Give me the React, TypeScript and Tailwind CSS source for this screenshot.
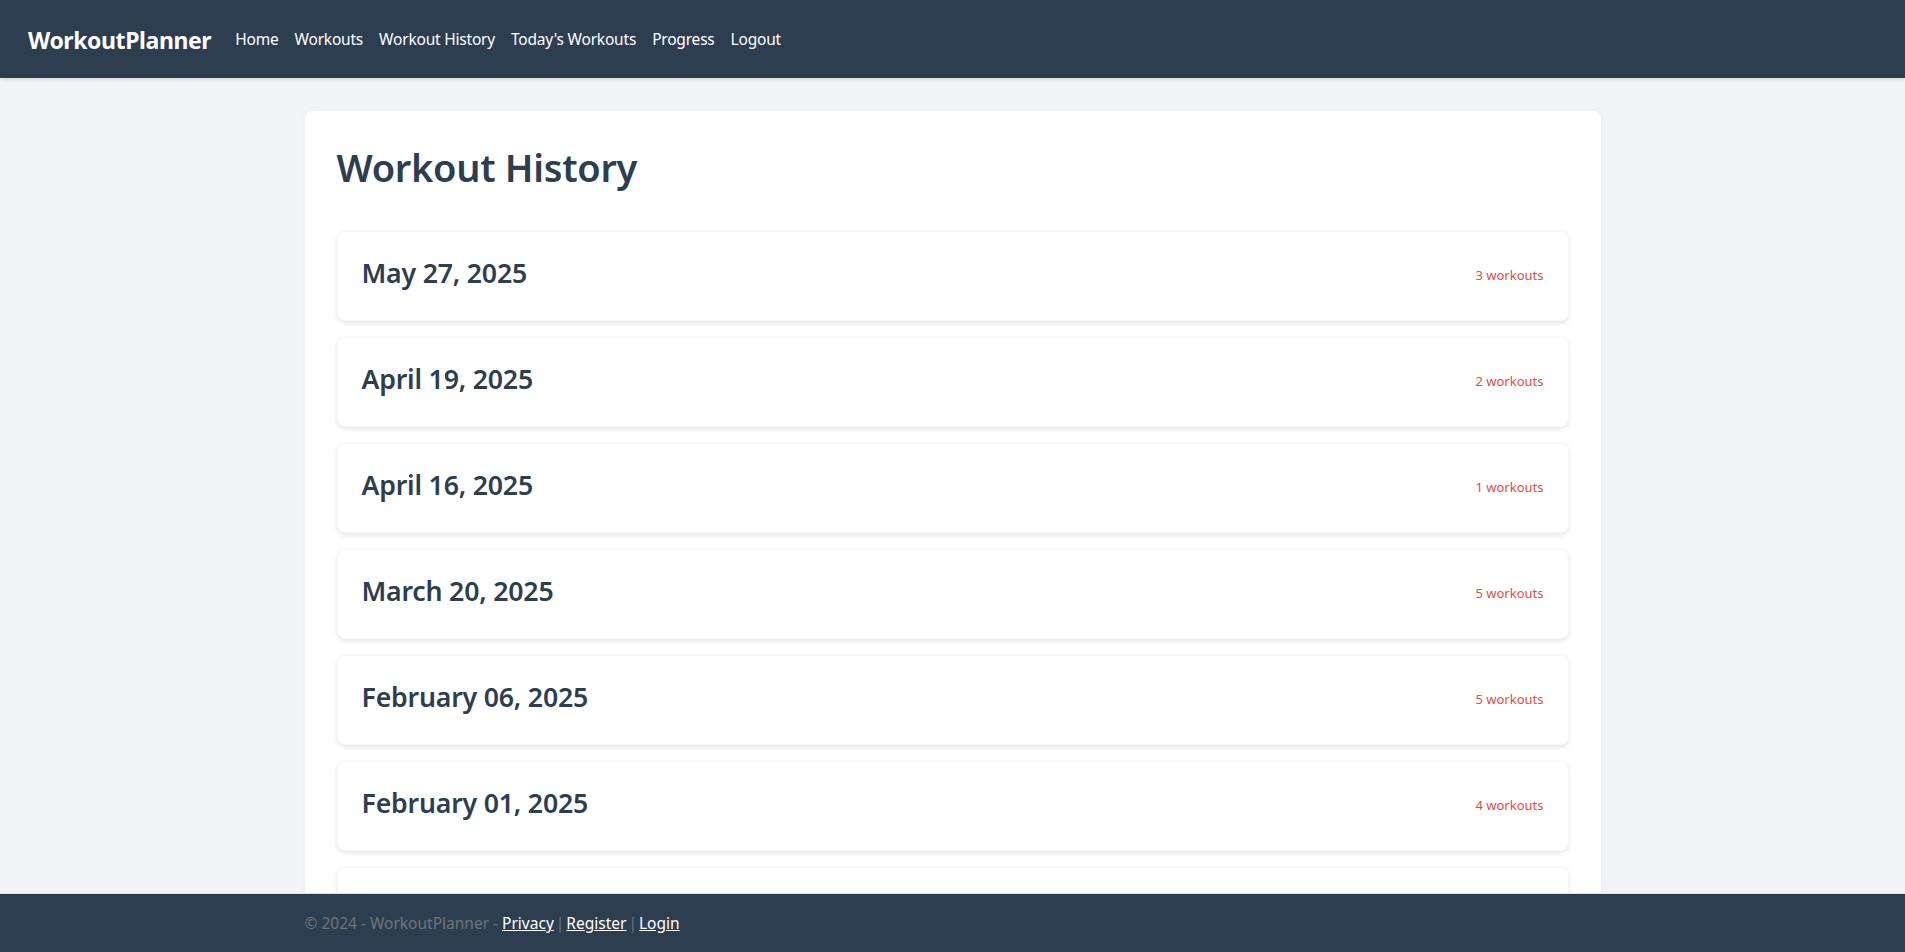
import React from "react";

const items = [
  { date: "May 27, 2025", count: 3 },
  { date: "April 19, 2025", count: 2 },
  { date: "April 16, 2025", count: 1 },
  { date: "March 20, 2025", count: 5 },
  { date: "February 06, 2025", count: 5 },
  { date: "February 01, 2025", count: 4 },
  { date: "January 15, 2025", count: 2 },
];

export default function App() {
  return (
    <div
      className="min-h-screen bg-[#f3f4f8] text-[#2c3e50]"
      style={{ fontFamily: '"Noto Sans", "Open Sans", sans-serif' }}
    >
      <nav className="h-[78px] bg-[#2c3e50] flex items-center pl-[28px] pt-[2px] shadow-[0_2px_4px_rgba(0,0,0,0.1)]">
        <span className="text-white font-bold text-[23px] tracking-[-0.4px] mr-[24px]">WorkoutPlanner</span>
        <div className="flex items-center gap-[16px] text-white text-[15.5px] tracking-[-0.2px]">
          <a>Home</a>
          <a>Workouts</a>
          <a>Workout History</a>
          <a>Today's Workouts</a>
          <a>Progress</a>
          <a>Logout</a>
        </div>
      </nav>
      <main className="flex justify-center pt-[33px] pb-[80px]">
        <div className="w-[1296px] bg-white rounded-[8px] shadow-[0_2px_8px_rgba(0,0,0,0.05)] p-[32px]">
          <h1 className="text-[38px] font-semibold leading-[48px] tracking-[-0.3px] mb-[40px]">Workout History</h1>
          <div className="flex flex-col gap-[16px]">
            {items.map((it) => (
              <div
                key={it.date}
                className="h-[90px] bg-white rounded-[8px] shadow-[0_2px_5px_rgba(0,0,0,0.1)] border border-[#f8f8f8] flex items-center justify-between px-[24px]"
              >
                <h3 className="text-[26.7px] font-semibold tracking-[-0.2px] mb-[5px]">{it.date}</h3>
                <span className="text-[#e74c3c] text-[13px]">{it.count} workouts</span>
              </div>
            ))}
          </div>
        </div>
      </main>
      <footer className="fixed bottom-0 left-0 right-0 h-[59px] bg-[#2c3e50] border-t border-[#dee2e6] flex items-center pt-[2px]">
        <div className="w-[1296px] mx-auto text-[15.5px] text-[#6c757d] flex items-center">
          <span className="whitespace-pre">© 2024 - WorkoutPlanner - </span>
          <a className="text-white underline">Privacy</a>
          <span className="mx-[2px]">|</span>
          <a className="text-white underline">Register</a>
          <span className="mx-[2px]">|</span>
          <a className="text-white underline">Login</a>
        </div>
      </footer>
    </div>
  );
}
